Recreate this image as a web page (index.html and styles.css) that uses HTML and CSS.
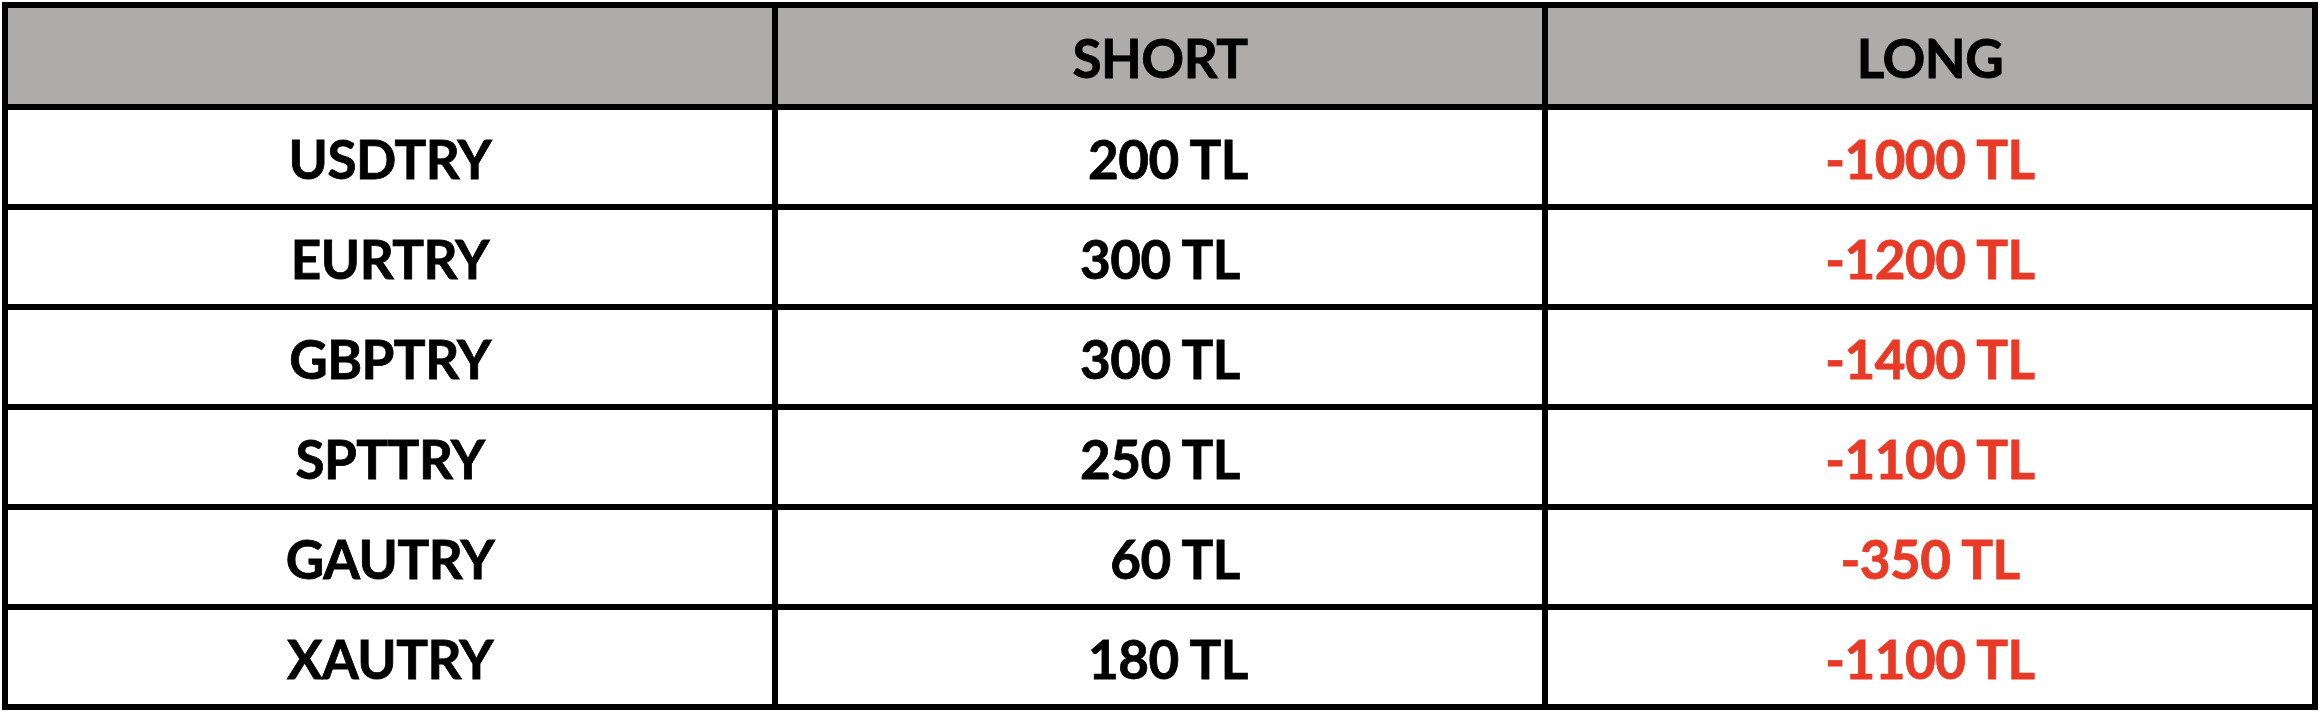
FILE: index.html
```html
<!DOCTYPE html>
<html lang="tr">
<head>
<meta charset="utf-8">
<title>Swap</title>
<link rel="stylesheet" href="styles.css">
</head>
<body>
<div class="table">
  <div class="cell head"></div>
  <div class="cell head">SHORT</div>
  <div class="cell head">LONG</div>

  <div class="cell">USDTRY</div>
  <div class="cell shift1">200 TL</div>
  <div class="cell neg">-1000 TL</div>

  <div class="cell">EURTRY</div>
  <div class="cell">300 TL</div>
  <div class="cell neg">-1200 TL</div>

  <div class="cell">GBPTRY</div>
  <div class="cell">300 TL</div>
  <div class="cell neg">-1400 TL</div>

  <div class="cell">SPTTRY</div>
  <div class="cell">250 TL</div>
  <div class="cell neg">-1100 TL</div>

  <div class="cell">GAUTRY</div>
  <div class="cell shift2">60 TL</div>
  <div class="cell neg">-350 TL</div>

  <div class="cell">XAUTRY</div>
  <div class="cell shift1">180 TL</div>
  <div class="cell neg">-1100 TL</div>
</div>
</body>
</html>
```

FILE: styles.css
```css
html, body {
  margin: 0;
  padding: 0;
  background: #ffffff;
}

body {
  padding: 2px;
  font-family: Lato, "Liberation Sans", sans-serif;
  font-weight: 700;
}

.table {
  width: 2316px;
  box-sizing: border-box;
  background: #000000;
  padding: 6px;
  display: grid;
  grid-template-columns: repeat(3, 1fr);
  grid-template-rows: 96px repeat(6, 94px);
  gap: 6px;
}

.cell {
  background: #ffffff;
  display: flex;
  align-items: center;
  justify-content: center;
  font-size: 53px;
  line-height: 1;
  color: #000000;
  letter-spacing: -0.5px;
  padding-top: 2px;
  box-sizing: border-box;
  -webkit-text-stroke: 0.8px currentColor;
}

.head {
  background: #adacaa;
}

.neg {
  color: #e83a26;
}

.shift1 {
  padding-left: 16px;
}

.shift2 {
  padding-left: 30px;
}
```
